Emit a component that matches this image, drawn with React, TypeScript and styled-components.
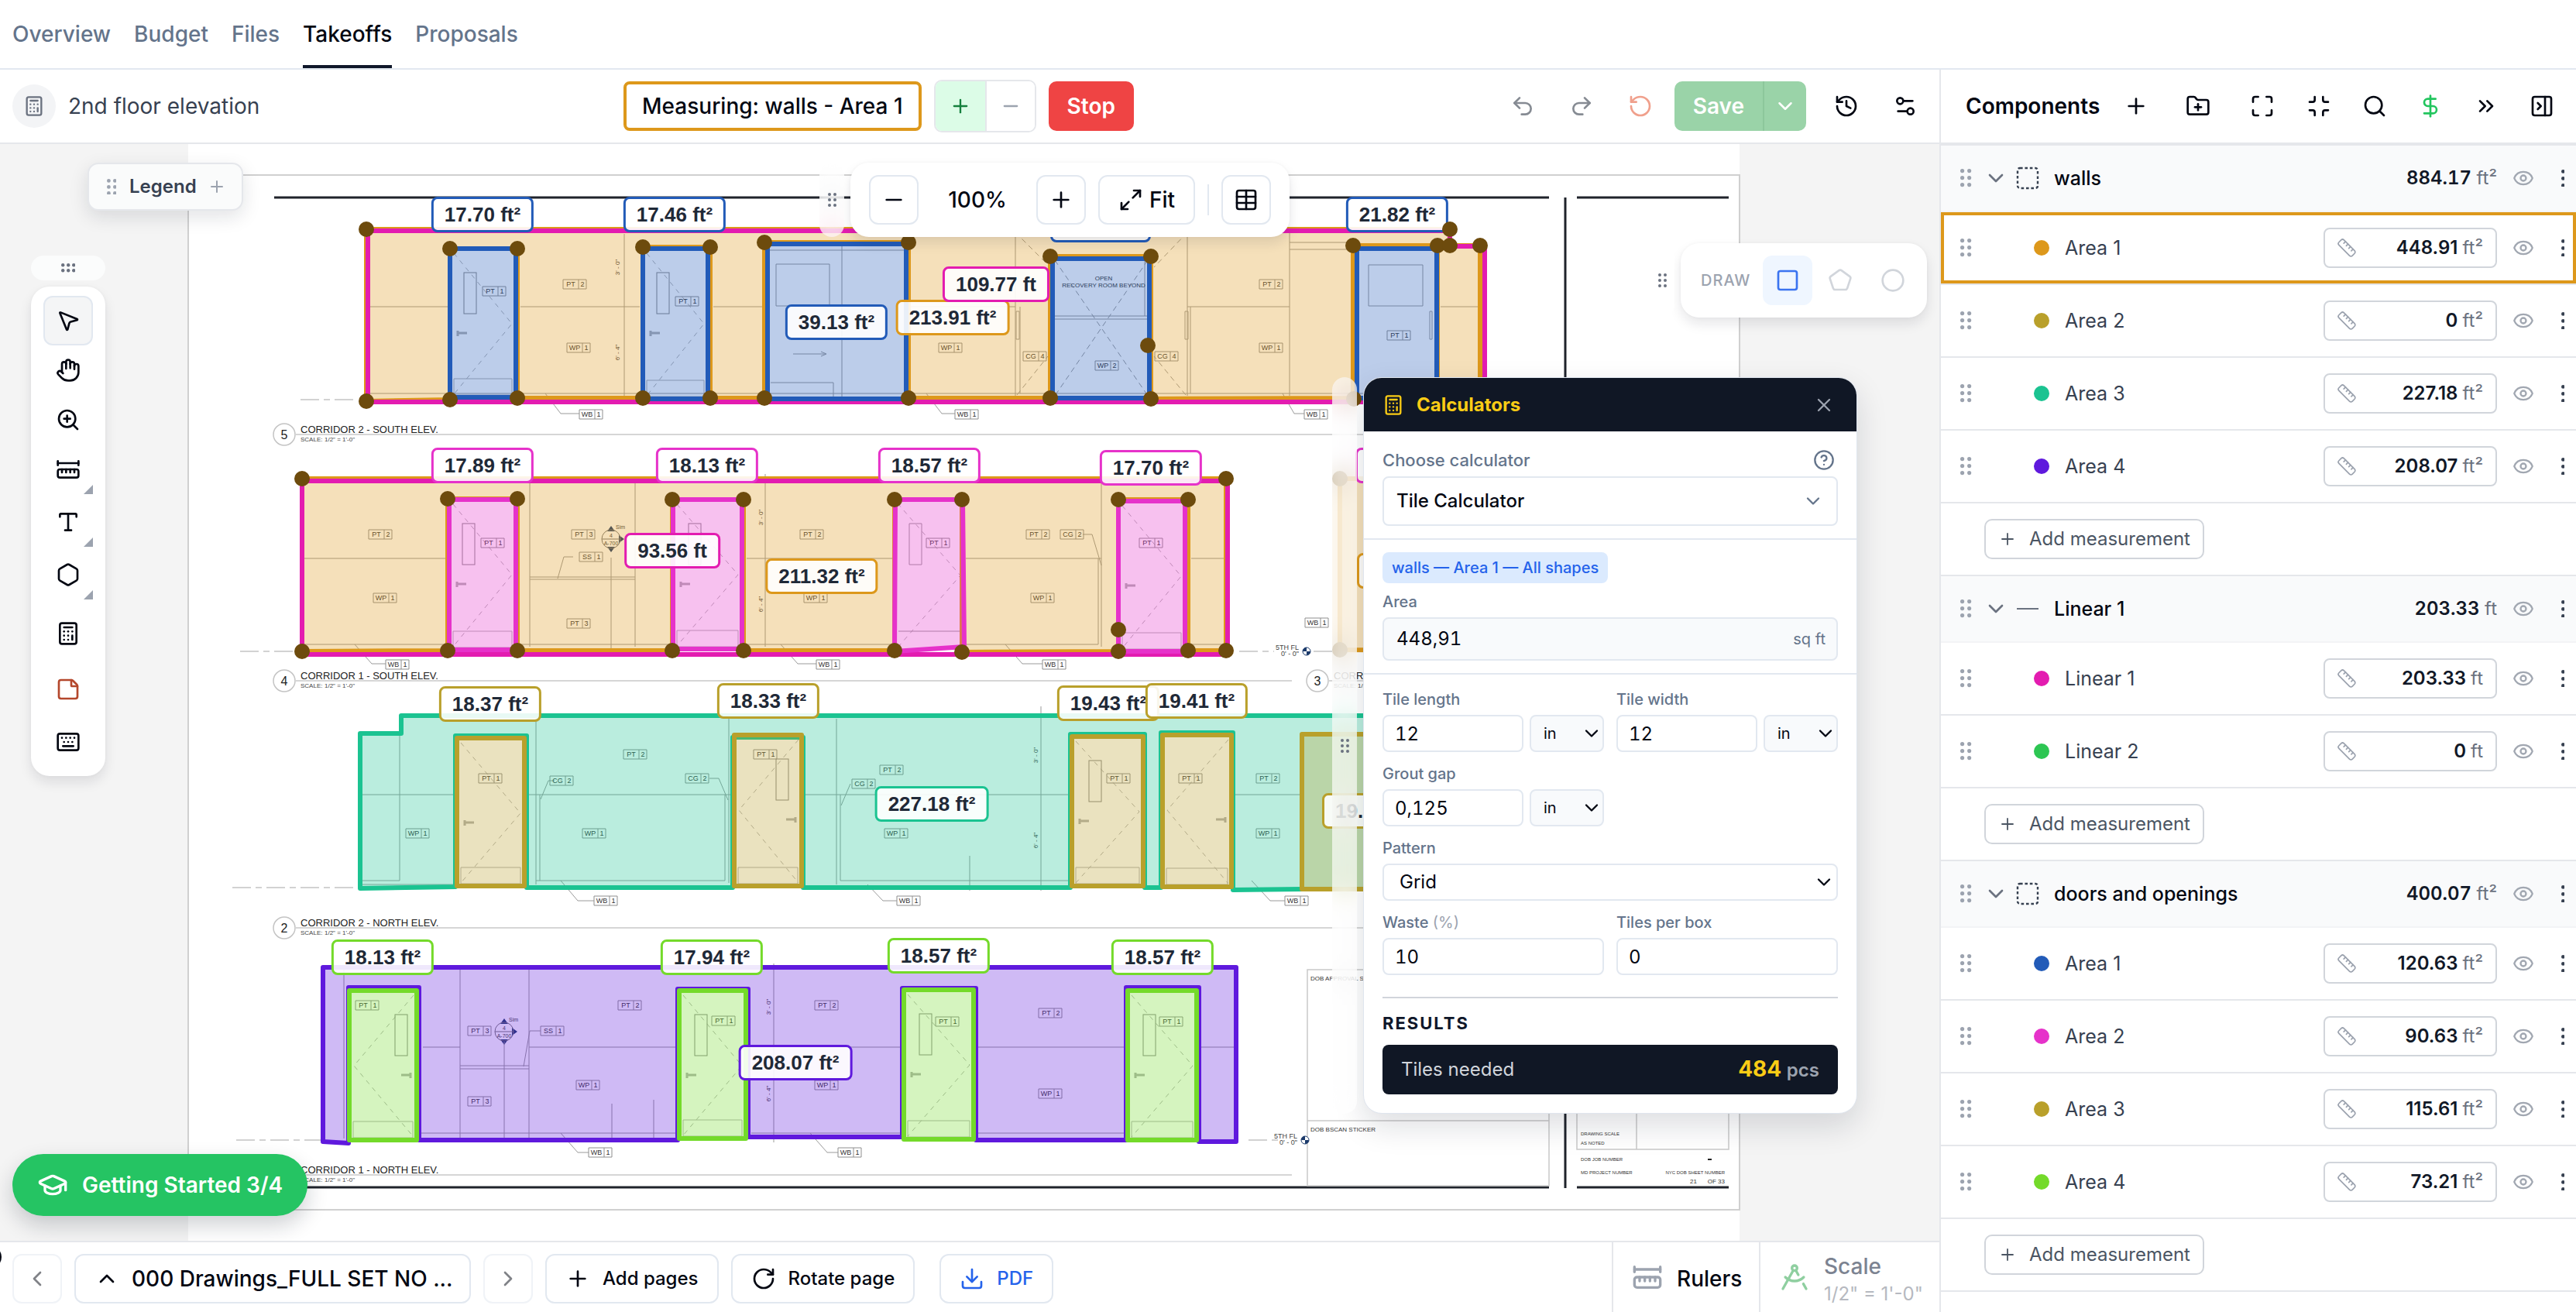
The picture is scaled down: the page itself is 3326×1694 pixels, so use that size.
import React from 'react';
import styled, { createGlobalStyle, css } from 'styled-components';
import {
  Calculator, ChevronDown, ChevronLeft, ChevronRight, ChevronUp, ChevronsRight, CircleHelp, Circle, DollarSign,
  Download, DraftingCompass, Eye, FolderPlus, GraduationCap, Hand, Hexagon, History, Keyboard, Maximize, Maximize2,
  Minimize, Minus, MousePointer2, PanelRightClose, Pentagon, Plus, Redo2, RotateCcw, RotateCw, RulerDimensionLine,
  Ruler, Search, Settings2, Square, StickyNote, Table, Type, Undo2, X, ZoomIn,
} from 'lucide-react';

const Global = createGlobalStyle`
  *, *::before, *::after { box-sizing: border-box; }
  body { margin: 0; background: #fff; color: #030712; font-family: Inter, "Liberation Sans", sans-serif; font-size: 28px; line-height: 40px; }
  button, input, select { font: inherit; color: inherit; margin: 0; }
  button { cursor: pointer; white-space: nowrap; }
  svg { flex: none; display: block; }
`;

const Shell = styled.div`display: flex; flex-direction: column; height: 100vh; overflow: hidden;`;

const Nav = styled.nav`display: flex; gap: 30px; height: 90px; flex: none; padding: 0 16px; border-bottom: 2px solid #e2e8f0;`;
const NavLink = styled.a<{ $active?: boolean }>`
  display: flex; align-items: center; text-decoration: none; font-weight: 500;
  border-bottom: 4px solid ${p => (p.$active ? '#0f172a' : 'transparent')}; padding-top: 4px;
  color: ${p => (p.$active ? '#030712' : '#64748b')};
`;

const Body = styled.div`display: flex; flex: 1; min-height: 0;`;
const Main = styled.main`display: flex; flex-direction: column; flex: 1; min-width: 0;`;

const TopBar = styled.header`
  display: flex; align-items: center; justify-content: space-between; flex: none;
  height: 96px; padding: 0 12px 0 16px; border-bottom: 2px solid #e5e7eb;
`;
const Group = styled.div<{ $gap?: number }>`display: flex; align-items: center; gap: ${p => p.$gap ?? 12}px;`;
const Avatar = styled.span`
  display: grid; place-items: center; width: 56px; height: 56px; border-radius: 50%; background: #f3f4f6; color: #6b7280;
`;
const Title = styled.h1`margin: 0; font-size: 28px; font-weight: 400; color: #374151;`;
const Measuring = styled.div`
  display: flex; align-items: center; height: 64px; padding: 0 20px; border: 4px solid #dd981b; border-radius: 8px; font-weight: 500;
`;
const Toggle = styled.div`display: flex; height: 68px; border: 2px solid #e5e7eb; border-radius: 10px; overflow: hidden;`;
const ToggleButton = styled.button<{ $on?: boolean }>`
  display: grid; place-items: center; width: 64px; border: 0; padding: 0;
  background: ${p => (p.$on ? '#dcfce7' : '#fff')}; color: ${p => (p.$on ? '#15803d' : '#9ca3af')};
  & + & { border-left: 2px solid #e5e7eb; }
`;
const StopButton = styled.button`
  height: 64px; padding: 0 24px; border: 0; border-radius: 10px; background: #ef4444; color: #fff; font-weight: 600;
`;
const IconButton = styled.button<{ $tone?: string }>`
  display: grid; place-items: center; width: 64px; height: 64px; padding: 0; border: 0; background: none;
  color: ${p => p.$tone ?? '#030712'};
`;
const SaveSplit = styled.div`display: flex; height: 64px; margin-right: 8px; border-radius: 10px; overflow: hidden; background: #9ad3a8; color: #fff;`;
const SaveButton = styled.button`border: 0; background: none; padding: 0 24px; font-weight: 600;`;
const SaveMenu = styled.button`
  display: grid; place-items: center; width: 56px; padding: 0; border: 0; border-left: 2px solid #8cc79b; background: none;
`;

const Canvas = styled.section`position: relative; flex: 1; min-height: 0; overflow: hidden; background: #f4f4f4;`;
const Sheet = styled.svg`position: absolute; left: 0; top: 0; font-family: "Liberation Sans", Arial, sans-serif;`;
const Pin = styled.span<{ $x: number; $y: number; $c: string }>`
  position: absolute; left: ${p => p.$x}px; top: ${p => p.$y - 186}px; transform: translate(-50%, -50%);
  height: 46px; min-width: 130px; padding: 0 14px; border: 3px solid ${p => p.$c}; border-radius: 8px; background: rgba(255, 255, 255, 0.9);
  font: bold 26px/40px "Liberation Sans", Arial, sans-serif; color: #1f2937; white-space: nowrap;
`;
const ShortPin = styled(Pin)`min-width: 0;`;

const Floating = styled.div<{ $x: number; $y: number }>`position: absolute; left: ${p => p.$x}px; top: ${p => p.$y}px; display: flex;`;
const card = css`background: #fff; border-radius: 24px; box-shadow: 0 8px 16px rgba(15, 23, 42, 0.1), 0 0 4px rgba(15, 23, 42, 0.04);`;
const SideGrip = styled.div`
  display: grid; place-items: center; width: 32px; margin-right: 8px; border-radius: 16px;
  background: rgba(255, 255, 255, 0.65); backdrop-filter: blur(16px); color: #6b7280;
`;
const ZoomCard = styled.div`${card} display: flex; align-items: center; gap: 16px; padding: 16px 24px; font-weight: 500;`;
const OutlineButton = styled.button<{ $tone?: string; $faint?: boolean; $pad?: number; $gap?: number }>`
  display: flex; align-items: center; justify-content: center; gap: ${p => p.$gap ?? 16}px; height: 64px; min-width: 64px;
  padding: 0 ${p => p.$pad ?? 0}px; border: 2px solid #e2e8f0; border-radius: 12px; background: #fff;
  color: ${p => p.$tone ?? '#030712'}; font-weight: 500; opacity: ${p => (p.$faint ? 0.5 : 1)};
`;
const Percent = styled.span`width: 120px; text-align: center;`;
const Divider = styled.span`width: 2px; height: 40px; background: #e2e8f0;`;
const DrawCard = styled.div`${card} display: flex; align-items: center; gap: 4px; padding: 16px 12px 16px 26px;`;
const DrawLabel = styled.span`margin-right: 12px; font-size: 20px; font-weight: 500; letter-spacing: 1px; color: #9ca3af;`;
const ShapeButton = styled(IconButton)<{ $on?: boolean }>`border-radius: 12px; background: ${p => (p.$on ? '#eff6ff' : 'none')};`;

const Legend = styled.button`
  position: absolute; left: 113px; top: 24px; display: flex; align-items: center; gap: 14px; height: 62px; padding: 0 20px;
  border: 2px solid #e5e7eb; border-radius: 14px; background: #fafbfb; box-shadow: 0 8px 24px rgba(15, 23, 42, 0.12);
  font-size: 24px; font-weight: 600; color: #374151;
`;

const ToolDock = styled.div`position: absolute; left: 40px; top: 144px; width: 96px; display: flex; flex-direction: column; gap: 8px;`;
const DockGrip = styled.div`display: grid; place-items: center; height: 32px; border-radius: 16px; background: #fbfcfc; color: #6b7280;`;
const DockCard = styled.div`${card} display: flex; flex-direction: column; align-items: center; padding: 12px 0;`;
const Tool = styled.button<{ $on?: boolean; $gap?: number; $tone?: string; $more?: boolean }>`
  position: relative; display: grid; place-items: center; width: 64px; height: 64px; padding: 0; margin-top: ${p => p.$gap ?? 0}px;
  border: 2px solid ${p => (p.$on ? '#e2e8f0' : 'transparent')}; border-radius: 12px;
  background: ${p => (p.$on ? '#f4f5f6' : 'none')}; color: ${p => p.$tone ?? '#030712'};
  ${p => p.$more && css`
    &::after { content: ''; position: absolute; right: -2px; bottom: -2px; border-left: 12px solid transparent; border-bottom: 12px solid #9ca3af; }
  `}
`;

const Calc = styled.section`
  width: 638px; border: 1px solid #dfe5ee; border-radius: 24px; overflow: hidden; background: #fff;
  box-shadow: 0 16px 40px rgba(15, 23, 42, 0.14); font-size: 24px; line-height: 32px;
`;
const CalcHead = styled.header`
  display: flex; align-items: center; gap: 16px; height: 69px; padding: 0 28px 0 24px; background: #101725; color: #facc15;
`;
const CalcTitle = styled.h2`margin: 0; flex: 1; font-size: 24px; font-weight: 700;`;
const PlainButton = styled.button`display: grid; place-items: center; padding: 0; border: 0; background: none; color: #9ca3af;`;
const Section = styled.div<{ $last?: boolean }>`
  display: flex; flex-direction: column; padding: ${p => (p.$last ? '12px 24px 24px' : '16px 24px')};
  ${p => !p.$last && css`border-bottom: 2px solid #e2e8f0;`}
`;
const Row = styled.div`
  display: flex; align-items: center; justify-content: space-between; height: 42px; padding-right: 4px; font-size: 22px; font-weight: 500; color: #64748b;
`;
const Badge = styled.span`
  align-self: flex-start; height: 40px; margin-bottom: 4px; padding: 4px 12px; border-radius: 8px; background: #dbeafe; color: #2563eb;
  font-size: 20px; font-weight: 500;
`;
const FieldLabel = styled.label`display: block; height: 40px; padding: 4px 0; font-size: 20px; font-weight: 500; color: #64748b;`;
const Muted = styled.span`font-weight: 400; color: #9ca3af;`;
const box = css`border: 2px solid #e2e8f0; border-radius: 8px; outline: 0; min-width: 0; width: 100%;`;
const Input = styled.input`${box} height: 48px; padding: 0 14px; background: #fff; font-size: 24px; font-variant-numeric: tabular-nums;`;
const AreaBox = styled.div`${box} display: flex; align-items: center; height: 56px; padding: 0 14px 0 16px; background: #f8fafc;`;
const AreaInput = styled.input`
  flex: 1; min-width: 0; padding: 0; border: 0; outline: 0; background: none; font-size: 24px; font-variant-numeric: tabular-nums;
`;
const Unit = styled.span`font-size: 20px; color: #64748b;`;
const Picker = styled.div<{ $w?: number; $inset: number; $gray?: boolean }>`
  position: relative; flex: none; width: ${p => (p.$w ? `${p.$w}px` : '100%')};
  svg { position: absolute; right: ${p => p.$inset}px; top: 50%; transform: translateY(-50%); pointer-events: none; color: ${p => (p.$gray ? '#64748b' : '#030712')}; }
`;
const Select = styled.select<{ $h?: number; $pad?: number; $small?: boolean }>`
  ${box} appearance: none; display: block; height: ${p => p.$h ?? 48}px; padding: 0 ${p => p.$pad ?? 16}px;
  background: ${p => (p.$small ? '#f8fafc' : '#fff')}; font-size: ${p => (p.$small ? 20 : 24)}px; font-weight: ${p => (p.$h ? 500 : 400)};
`;
const Fields = styled.div`display: grid; grid-template-columns: 1fr 1fr; gap: 8px 16px;`;
const Field = styled.div<{ $wide?: boolean }>`${p => p.$wide && css`grid-column: 1 / -1;`} min-width: 0;`;
const Pair = styled.div`display: flex; gap: 8px;`;
const Results = styled.h3`
  margin: 28px 0 0; padding: 16px 0 12px; border-top: 2px solid #d1d5db; font-size: 22px; line-height: 32px; font-weight: 700; letter-spacing: 2px; color: #0f172a;
`;
const ResultBox = styled.div`
  display: flex; align-items: center; justify-content: space-between; height: 64px; padding: 0 24px; border-radius: 8px; background: #101725; color: #d1d5db;
`;
const ResultValue = styled.strong`font-size: 28px; font-weight: 700; color: #facc15;`;
const ResultUnit = styled.span`font-size: 24px; font-weight: 600; color: #9ca3af;`;

const Started = styled.button`
  position: absolute; left: 16px; bottom: 32px; display: flex; align-items: center; gap: 18px; height: 80px; padding: 0 32px;
  border: 0; border-radius: 40px; background: #25c463; color: #fff; font-weight: 600; box-shadow: 0 12px 28px rgba(15, 23, 42, 0.2);
`;

const BottomBar = styled.footer`
  position: relative; display: flex; align-items: center; gap: 16px; height: 92px; flex: none; padding: 4px 0 0 16px; border-top: 2px solid #e5e7eb;
`;
const EdgeDot = styled.span`position: absolute; left: -28px; top: 4px; width: 30px; height: 30px; border-radius: 50%; background: #030712;`;
const PageButton = styled(OutlineButton)`width: 512px; justify-content: flex-start;`;
const Small = styled.span`font-size: 24px;`;
const Spacer = styled.span`flex: 1;`;
const Cell = styled.button<{ $w: number; $tone?: string }>`
  display: flex; align-items: center; gap: 18px; align-self: stretch; width: ${p => p.$w}px; padding: 0 0 0 24px; margin: -4px 0 0 -16px;
  border: 0; border-left: 2px solid #e5e7eb; background: none; text-align: left; font-weight: 500;
  & > svg { color: ${p => p.$tone ?? '#9ca3af'}; }
`;
const ScaleText = styled.span`display: flex; flex-direction: column; padding-top: 8px; line-height: 36px; color: #7c8391;`;
const ScaleValue = styled.small`font-size: 24px; font-weight: 400; color: #b6b9c0;`;
const CellText = styled.span`padding-top: 4px;`;

const Side = styled.aside`width: 822px; flex: none; border-left: 2px solid #e5e7eb; overflow: hidden;`;
const SideHead = styled.header`display: flex; align-items: center; height: 98px; padding-left: 32px; border-bottom: 4px solid #e5e7eb;`;
const SideTitle = styled.h2`margin: 0 16px 0 0; width: 170px; font-size: 28px; font-weight: 600;`;
const HeadIcon = styled(IconButton)<{ $w: number }>`width: ${p => p.$w}px; flex: none;`;
const line = css`display: flex; align-items: center; padding-left: 20px; font-size: 25px; white-space: nowrap;`;
const GroupRow = styled.div`${line} height: 86px; border-bottom: 2px solid #f3f4f6; background: #f9fafb; font-weight: 500;`;
const ItemRow = styled.div<{ $on?: boolean }>`
  ${line} height: 94px; border-bottom: 2px solid #e5e7eb; color: #374151;
  box-shadow: ${p => (p.$on ? 'inset 0 0 0 4px #dd981b' : 'none')};
`;
const AddRow = styled.div`display: flex; align-items: center; height: 94px; padding-left: 56px; border-bottom: 2px solid #e5e7eb;`;
const Slot = styled.span<{ $w: number; $tone?: string }>`display: grid; place-items: center; width: ${p => p.$w}px; flex: none; color: ${p => p.$tone ?? '#9ca3af'};`;
const Dot = styled.span<{ $c: string }>`width: 20px; height: 20px; margin: 0 20px 0 75px; border-radius: 50%; background: ${p => p.$c};`;
const Name = styled.span<{ $lead?: boolean }>`flex: 1; padding-left: ${p => (p.$lead ? 18 : 0)}px;`;
const Value = styled.span<{ $tabular?: boolean }>`
  font-size: 24px; font-weight: 600; color: #111827; font-variant-numeric: ${p => (p.$tabular ? 'tabular-nums' : 'normal')};
`;
const Ft = styled.span`font-weight: 400; color: #6b7280;`;
const ValueButton = styled.button`
  display: flex; align-items: center; justify-content: space-between; width: 224px; height: 52px; padding: 0 16px 0 14px; flex: none;
  border: 2px solid #d1d5db; border-radius: 8px; background: #fff;
`;
const RowIcon = styled(IconButton)<{ $w: number }>`width: ${p => p.$w}px; height: 40px; flex: none;`;
const AddButton = styled.button`
  display: flex; align-items: center; gap: 16px; height: 52px; padding: 0 16px; border: 2px solid #d1d5db; border-radius: 10px;
  background: #fff; font-size: 24px; color: #4b5563;
`;

/* ---------- small drawings ---------- */
const Dots = ({ cols, rows, gap, r }: { cols: number; rows: number; gap: number; r: number }) => (
  <svg width={(cols - 1) * gap + r * 2} height={(rows - 1) * gap + r * 2} fill="currentColor" aria-hidden>
    {Array.from({ length: cols * rows }, (_, i) => (
      <circle key={i} cx={r + (i % cols) * gap} cy={r + Math.floor(i / cols) * gap} r={r} />
    ))}
  </svg>
);
const DashedSquare = () => (
  <svg width="32" height="32" fill="none" stroke="#374151" strokeWidth="2.4" strokeDasharray="3.6 2.8" aria-hidden>
    <rect x="3" y="3" width="26" height="26" rx="3" />
  </svg>
);
const Dash = () => (
  <svg width="32" height="32" stroke="#6b7280" strokeWidth="2" aria-hidden><path d="M2 16H30" /></svg>
);

/* ---------- drawing sheet ---------- */
const C = { orange: '#dd981b', magenta: '#e31cb0', blue: '#225bb8', pink: '#e632ca', green: '#1bc391', gold: '#b9a02b', purple: '#5f19dd', lime: '#74da2a', knob: '#6d4b0d' };

type T = [number, number, string, string];
const tags: T[] = [
  [742, 367, 'PT', '2'], [747, 449, 'WP', '1'], [638, 376, 'PT', '1'], [887, 389, 'PT', '1'], [1227, 449, 'WP', '1'], [1336, 460, 'CG', '4'],
  [1429, 472, 'WP', '2'], [1506, 460, 'CG', '4'], [763, 535, 'WB', '1'], [1248, 535, 'WB', '1'], [1641, 367, 'PT', '2'], [1641, 449, 'WP', '1'],
  [1699, 535, 'WB', '1'], [1806, 433, 'PT', '1'], [491, 690, 'PT', '2'], [497, 772, 'WP', '1'], [636, 701, 'PT', '1'], [753, 690, 'PT', '3'],
  [763, 719, 'SS', '1'], [747, 805, 'PT', '3'], [1048, 690, 'PT', '2'], [1053, 772, 'WP', '1'], [1211, 701, 'PT', '1'], [1340, 690, 'PT', '2'],
  [1384, 690, 'CG', '2'], [1346, 772, 'WP', '1'], [1486, 701, 'PT', '1'], [513, 858, 'WB', '1'], [1069, 858, 'WB', '1'], [1361, 858, 'WB', '1'],
  [1700, 804, 'WB', '1'], [820, 974, 'PT', '2'], [633, 1005, 'PT', '1'], [725, 1008, 'CG', '2'], [900, 1005, 'CG', '2'], [539, 1076, 'WP', '1'],
  [767, 1076, 'WP', '1'], [988, 974, 'PT', '1'], [1151, 994, 'PT', '2'], [1115, 1012, 'CG', '2'], [1157, 1076, 'WP', '1'], [1444, 1005, 'PT', '1'],
  [1537, 1005, 'PT', '1'], [1637, 1005, 'PT', '2'], [1637, 1076, 'WP', '1'], [782, 1163, 'WB', '1'], [1173, 1163, 'WB', '1'], [1674, 1163, 'WB', '1'],
  [474, 1298, 'PT', '1'], [619, 1331, 'PT', '3'], [713, 1331, 'SS', '1'], [813, 1298, 'PT', '2'], [934, 1318, 'PT', '1'], [1067, 1298, 'PT', '2'],
  [1223, 1319, 'PT', '1'], [1356, 1308, 'PT', '2'], [1512, 1319, 'PT', '1'], [619, 1422, 'PT', '3'], [759, 1401, 'WP', '1'], [1067, 1401, 'WP', '1'],
  [1356, 1412, 'WP', '1'], [775, 1488, 'WB', '1'], [1097, 1488, 'WB', '1'],
];

/* left, right, top, bottom, window x, colour, swing towards the left */
type D = [number, number, number, number, number, string, boolean];
const doors: D[] = [
  [581, 666, 321, 513, 599, C.blue, false], [830, 914, 321, 515, 848, C.blue, false],
  [580, 666, 645, 839, 597, C.pink, false], [869, 958, 645, 838, 889, C.pink, false],
  [1444, 1530, 647, 841, 0, C.pink, false],
  [590, 677, 953, 1144, 0, C.gold, false], [948, 1035, 949, 1144, 1002, C.gold, true], [1384, 1476, 951, 1144, 1406, C.gold, false],
  [1501, 1590, 949, 1145, 0, C.gold, true],
  [451, 538, 1279, 1472, 510, C.lime, true], [877, 963, 1279, 1470, 897, C.lime, false],
  [1167, 1257, 1278, 1471, 1187, C.lime, false], [1456, 1545, 1279, 1472, 1476, C.lime, false],
];

const lines = [
  'M476 396H578M672 396H826M921 396H984M1176 396H1311M1533 396H1665M1860 396H1908',
  'M806 302V511M1087 318V512M994 323H1168M1311 300V511M1317 396V508M1533 300V511M1665 300V511M1537 396V508M1665 313H1745M1665 322H1745',
  'M476 508H1910M1002 341H1071V395H1002ZM995 494H1076V513M1024 457H1066M1060 454L1067 457L1060 460M1767 342H1837V395H1767ZM1362 408H1482M1362 412H1482M1478 336V408',
  'M1312 402h4v36h-4zM1530 402h4v36h-4zM1846 402h3v36h-3z',
  'M393 721H576M964 721H1152M1247 721H1422M1538 721H1582M684 624V835M820 624V835M684 745H820M684 748H820M988 612V835M1422 624V835M1418 721V832H1247M393 832H576M672 832H866M960 832H1152M1538 832H1580',
  'M516 950V1137H468M468 1026H586M682 1026H944M1040 1026H1380M1592 1026H1678M692 928V1142M697 1026V1137M941 928V1140M936 1026V1137H692M1080 928V1142M1085 1026V1137M1344 912V1150M1085 1137H1380M1252 1105V1150M468 1142H588',
  'M444 1252V1470M546 1352H594M683 1352H874M970 1352H1165M1262 1352H1454M1550 1352H1594M594 1252V1470M683 1252V1470M594 1376H683M594 1380H683M999 1244V1475M541 1463H874M970 1463H1165M1262 1463H1454M651 1345V1470M790 1425V1470M789 720V838M844 1420V1470',
  'M704 508l20 26h24M1196 508l20 26h17M1656 508l15 26h13M458 832l22 25h18M1008 832l22 25h24M1298 832l22 25h26M724 1137l22 26h21M1120 1142l20 21h18M1616 1137l24 26h19M724 1463l22 25h14M1046 1463l22 25h14',
  'M740 719h-12l-8 28M716 1008h-8l-10 24M916 1005h12l12 28M1398 690h12l12 40M1098 1012l-12 28M698 1331h-14l-8 46',
];

const Elevation = ({ n, y, name, end = 1668, x = 367 }: { n: string; y: number; name: string; end?: number; x?: number }) => (
  <g>
    <path d={`M${x + 15} ${y}H${end}`} stroke="#c9c9c9" strokeWidth="1.5" />
    <circle cx={x} cy={y} r="14" fill="#fff" stroke="#c4c4c4" strokeWidth="1.5" />
    <text x={x} y={y + 6} fontSize="16" textAnchor="middle" fill="#222">{n}</text>
    <text x={x + 21} y={y - 2} fontSize="13" fill="#222">{name}</text>
    <text x={x + 21} y={y + 9} fontSize="8" fill="#444">SCALE:</text>
    <text x={x + 52} y={y + 9} fontSize="8" fill="#444">1/2" = 1'-0"</text>
  </g>
);
const Level = ({ x, y }: { x: number; y: number }) => (
  <g>
    <text x={x - 10} y={y - 2} fontSize="9" textAnchor="end" fill="#444">5TH FL</text>
    <text x={x - 10} y={y + 6} fontSize="9" textAnchor="end" fill="#444">0' - 0"</text>
    <circle cx={x} cy={y} r="5" fill="#fff" stroke="#1b3a6b" />
    <path d={`M${x} ${y}V${y - 5}A5 5 0 0 0 ${x - 5} ${y}ZM${x} ${y}V${y + 5}A5 5 0 0 0 ${x + 5} ${y}Z`} fill="#1b3a6b" />
  </g>
);
const Marker = ({ x, y }: { x: number; y: number }) => (
  <g>
    <path d={`M${x - 5} ${y - 10}L${x} ${y - 17}L${x + 5} ${y - 10}ZM${x - 5} ${y + 10}L${x} ${y + 17}L${x + 5} ${y + 10}ZM${x + 10} ${y - 5}L${x + 17} ${y}L${x + 10} ${y + 5}Z`} fill="#1b3a6b" />
    <circle cx={x} cy={y} r="12" fill="none" stroke="#777" />
    <path d={`M${x - 12} ${y}h24`} stroke="#777" />
    <text x={x} y={y - 2} fontSize="7" textAnchor="middle" fill="#444">4</text>
    <text x={x} y={y + 8} fontSize="7" textAnchor="middle" fill="#444">A-700</text>
    <text x={x + 6} y={y - 13} fontSize="7" fill="#444">Sim</text>
  </g>
);

const orangeTop = '473,296 1872,296 1872,317 1911,317 1911,514 1856,514 1856,317 1747,317 1747,514 1486,515 1486,331 1356,331 1356,514 1173,514 1173,313 987,313 987,514 917,514 917,319 830,319 830,514 668,514 668,321 581,321 581,516 473,518';
const orangeMid = '390,618 1583,618 1583,840 1534,840 1534,645 1444,645 1444,841 1242,842 1242,645 1155,645 1155,840 960,840 960,645 868,645 868,840 668,840 668,644 578,644 578,840 390,841';
const greenPoly = '465,947 518,947 518,924 1900,924 1900,1148 1681,1148 1592,1149 1592,946 1499,946 1499,1146 1478,1146 1478,948 1382,948 1382,1146 1037,1146 1037,952 946,952 946,1146 680,1146 680,950 588,950 588,1145 465,1147';
const purplePoly = '417,1249 1596,1249 1596,1474 1548,1474 1548,1275 1454,1275 1454,1472 1260,1472 1260,1276 1165,1276 1165,1468 966,1468 966,1277 875,1277 875,1472 541,1472 541,1275 450,1275 450,1476 417,1474';
const knobs = [
  [473, 296], [473, 518], [581, 321], [668, 321], [581, 516], [668, 514], [830, 319], [917, 319], [830, 514], [917, 514], [987, 313], [1173, 313],
  [987, 514], [1173, 514], [1356, 331], [1486, 331], [1482, 446], [1356, 514], [1486, 515], [1747, 317], [1856, 317], [1872, 317], [1872, 296],
  [1911, 317], [1748, 515], [390, 618], [1583, 618], [390, 841], [1583, 840], [578, 644], [668, 644], [578, 840], [668, 840], [868, 645], [960, 645],
  [868, 840], [960, 840], [1155, 645], [1242, 645], [1155, 840], [1242, 842], [1444, 645], [1534, 645], [1444, 813], [1444, 841], [1534, 840],
  [1730, 618], [1730, 839],
];
const pins: [number, number, string, string][] = [
  [623, 277, '17.70 ft²', C.blue], [871, 277, '17.46 ft²', C.blue], [1080, 416, '39.13 ft²', C.blue], [1230, 410, '213.91 ft²', C.orange],
  [1286, 367, '109.77 ft', C.magenta], [1421, 290, '', C.blue], [1804, 277, '21.82 ft²', C.blue], [623, 601, '17.89 ft²', C.pink],
  [913, 601, '18.13 ft²', C.pink], [1200, 601, '18.57 ft²', C.pink], [1486, 604, '17.70 ft²', C.pink],
  [1061, 744, '211.32 ft²', C.orange], [633, 909, '18.37 ft²', C.gold], [992, 905, '18.33 ft²', C.gold], [1431, 908, '19.43 ft²', C.gold],
  [1545, 905, '19.41 ft²', C.gold], [1203, 1038, '227.18 ft²', C.green], [1772, 1047, '19.40', C.gold], [494, 1236, '18.13 ft²', C.lime],
  [919, 1236, '17.94 ft²', C.lime], [1212, 1234, '18.57 ft²', C.lime], [1501, 1236, '18.57 ft²', C.lime], [1027, 1372, '208.07 ft²', C.purple],
  [1815, 601, '', C.pink], [1817, 737, '', C.orange],
];

const Plan = () => (
  <Sheet width="2504" height="1416" viewBox="0 186 2504 1416" fill="none" role="img" aria-label="2nd floor elevation drawing">
    <rect x="243" y="186" width="2003" height="1416" fill="#fff" />
    <rect x="243" y="226" width="2003" height="1336" stroke="#d0d0d0" strokeWidth="2" />
    <path d="M354 255H2000M2036 255H2232M2021 255V1534M354 1533H2000M2036 1533H2232" stroke="#1f232b" strokeWidth="3" />
    <path d="M1688 1252H2000V1531H1688ZM1688 1447H2000M2036 1300V1484H2232V1300M2113 1300V1484" stroke="#c9c9c9" strokeWidth="1.5" />
    <g fill="#333">
      <text x="1692" y="1266" fontSize="8">DOB APPROVAL STAMP</text>
      <text x="1692" y="1461" fontSize="8">DOB BSCAN STICKER</text>
      <text x="2041" y="1466" fontSize="6">DRAWING SCALE</text>
      <text x="2041" y="1478" fontSize="6">AS NOTED</text>
      <text x="2041" y="1499" fontSize="6">DOB JOB NUMBER</text>
      <text x="2041" y="1516" fontSize="6">MD PROJECT NUMBER</text>
      <text x="2227" y="1516" fontSize="6" textAnchor="end">NYC DOB SHEET NUMBER</text>
      <text x="2182" y="1528" fontSize="8">21</text>
      <text x="2227" y="1528" fontSize="8" textAnchor="end">OF 33</text>
      <path d="M2205 1497h5" stroke="#222" strokeWidth="2" />
    </g>
    <Elevation n="5" y={561} name="CORRIDOR 2 - SOUTH ELEV." end={1900} />
    <Elevation n="4" y={879} name="CORRIDOR 1 - SOUTH ELEV." />
    <Elevation n="3" y={879} name="CORRIDOR 1 - WEST ELEV." end={1990} x={1701} />
    <Elevation n="2" y={1198} name="CORRIDOR 2 - NORTH ELEV." end={1900} />
    <Elevation n="1" y={1517} name="CORRIDOR 1 - NORTH ELEV." />
    <path d="M388 516H461M310 841H380M300 1146H460M305 1472H415M1600 841H1645M1696 841H1740M1612 1472H1655" stroke="#c4c4c4" strokeWidth="1.5" strokeDasharray="24 6 8 6" />
    <Level x={1687} y={841} />
    <Level x={1685} y={1472} />
    <Marker x={789} y={696} />
    <Marker x={651} y={1332} />
    <g stroke="#9a9a9a" strokeWidth="1">
      {lines.map(d => <path key={d} d={d} />)}
      <path d="M1362 336L1482 511M1482 336L1362 511M1311 300L1356 345M1533 300L1490 345M1313 510L1353 460M1531 510L1490 460" strokeDasharray="7 5" />
      <path d="M1159 650L1240 743L1159 836" strokeDasharray="6 6" stroke="#b0b0b0" />
      <path d="M1174 676h16v53h-16zM1160 815h80" />
    </g>
    {doors.map(([a, b, t, m, w, , left]) => (
      <g key={`${a}-${t}`} stroke="#b0b0b0">
        <path d={left ? `M${b - 4} ${t + 6}L${a + 6} ${t + 97}L${b - 4} ${m - 4}` : `M${a + 5} ${t + 6}L${b - 5} ${t + 97}L${a + 5} ${m - 4}`} strokeDasharray="6 6" />
        <path d={`M${a + 5} ${m - 24}H${b - 5}V${m - 3}H${a + 5}Z`} />
        {w > 0 && <rect x={w} y={t + 31} width="16" height="53" stroke="#888" />}
        <path d={left ? `M${b - 8} ${t + 106}v7M${b - 8} ${t + 109}h-12` : `M${a + 10} ${t + 106}v7M${a + 10} ${t + 109}h12`} strokeWidth="3" />
      </g>
    ))}
    {tags.map(([x, y, a, b]) => (
      <g key={`${x}-${y}`}>
        <path d={`M${x - 15} ${y - 6}h30v12h-30zM${x + 5} ${y - 6}v12`} stroke="#8f8f8f" />
        <text x={x - 5} y={y + 3} fontSize="9" textAnchor="middle" fill="#333">{a}</text>
        <text x={x + 10} y={y + 3} fontSize="9" textAnchor="middle" fill="#333">{b}</text>
      </g>
    ))}
    <g fill="#333" fontSize="8" textAnchor="middle">
      <text x="1425" y="362">OPEN</text>
      <text x="1425" y="371">RECOVERY ROOM BEYOND</text>
      {[[800, 345, "3' - 0\""], [800, 455, "6' - 4\""], [985, 668, "3' - 0\""], [985, 780, "6' - 4\""], [1340, 975, "3' - 0\""], [1340, 1085, "6' - 4\""], [995, 1300, "3' - 0\""], [995, 1412, "6' - 4\""]].map(([x, y, s]) => (
        <text key={`${x}${y}`} transform={`translate(${x} ${y}) rotate(-90)`}>{s}</text>
      ))}
    </g>

    <g strokeWidth="6" strokeLinejoin="round" fillOpacity="0.3">
      <polygon points={orangeTop} fill={C.orange} stroke={C.orange} />
      <polygon points={orangeMid} fill={C.orange} stroke={C.orange} />
      <polygon points="1730,618 1900,618 1900,840 1730,839" fill={C.orange} stroke={C.orange} />
      <polygon points={greenPoly} fill={C.green} stroke={C.green} />
      <polygon points={purplePoly} fill={C.purple} stroke={C.purple} />
      <path d="M475 519V298H1872V318H1917V519H473" stroke={C.magenta} />
      <path d="M390 846V621H1585V845H388" stroke={C.magenta} />
      <path d="M991 315H1170V515H991ZM1359 334H1484V514H1359ZM1752 321H1855V514H1752Z" fill={C.blue} stroke={C.blue} />
      <path d="M1156 645H1243L1245 835L1155 841Z" fill={C.pink} stroke={C.pink} />
      {doors.map(([a, b, t, m, , c]) => (
        <path key={`${a}-${t}`} d={`M${a} ${t}H${b}V${m}H${a}Z`} fill={c} stroke={c} />
      ))}
      <path d="M1681 948H1800V1148H1681Z" fill={C.gold} stroke={C.gold} />
    </g>
  </Sheet>
);

const Knobs = () => (
  <Sheet width="2504" height="1416" viewBox="0 186 2504 1416" fill={C.knob} aria-hidden>
    {knobs.map(([x, y]) => <circle key={`${x}-${y}`} cx={x} cy={y} r="10" />)}
  </Sheet>
);

/* ---------- side panel ---------- */
const groups = [
  { name: 'walls', total: '884.17', unit: 'ft²', area: true, items: [['Area 1', '448.91', '#dd981b'], ['Area 2', '0', '#b9a02b'], ['Area 3', '227.18', '#1bc391'], ['Area 4', '208.07', '#5f19dd']] },
  { name: 'Linear 1', total: '203.33', unit: 'ft', area: false, items: [['Linear 1', '203.33', '#e31cb0'], ['Linear 2', '0', '#2dc653']] },
  { name: 'doors and openings', total: '400.07', unit: 'ft²', area: true, items: [['Area 1', '120.63', '#225bb8'], ['Area 2', '90.63', '#e632ca'], ['Area 3', '115.61', '#b9a02b'], ['Area 4', '73.21', '#74da2a']] },
];

const RowEnd = () => (
  <>
    <RowIcon $w={68} $tone="#a1a7b1" aria-label="Toggle visibility"><Eye size={28} /></RowIcon>
    <RowIcon $w={34} $tone="#374151" aria-label="More"><Dots cols={1} rows={3} gap={9} r={2.4} /></RowIcon>
  </>
);

const SidePanel = () => (
  <Side>
    <SideHead>
      <SideTitle>Components</SideTitle>
      <HeadIcon $w={68} aria-label="Add"><Plus size={32} /></HeadIcon>
      <HeadIcon $w={92} aria-label="Add folder"><FolderPlus size={32} /></HeadIcon>
      <HeadIcon $w={74} aria-label="Expand all"><Maximize size={32} /></HeadIcon>
      <HeadIcon $w={72} aria-label="Collapse all"><Minimize size={32} /></HeadIcon>
      <HeadIcon $w={72} aria-label="Search"><Search size={32} /></HeadIcon>
      <HeadIcon $w={72} $tone="#22c55e" aria-label="Costs"><DollarSign size={32} /></HeadIcon>
      <HeadIcon $w={72} aria-label="More columns"><ChevronsRight size={32} /></HeadIcon>
      <HeadIcon $w={72} aria-label="Close panel"><PanelRightClose size={32} /></HeadIcon>
    </SideHead>
    {groups.map((g, gi) => (
      <React.Fragment key={g.name}>
        <GroupRow>
          <Slot $w={25}><Dots cols={2} rows={3} gap={9} r={2.6} /></Slot>
          <Slot $w={51} $tone="#6b7280"><ChevronDown size={32} /></Slot>
          <Slot $w={32}>{g.area ? <DashedSquare /> : <Dash />}</Slot>
          <Name $lead>{g.name}</Name>
          <Value $tabular>{g.total} <Ft>{g.unit}</Ft></Value>
          <RowEnd />
        </GroupRow>
        {g.items.map(([name, value, color], i) => (
          <ItemRow key={name} $on={gi === 0 && i === 0}>
            <Slot $w={25}><Dots cols={2} rows={3} gap={9} r={2.6} /></Slot>
            <Dot $c={color} />
            <Name>{name}</Name>
            <ValueButton>
              <Slot $w={28}><Ruler size={26} strokeWidth={1.6} /></Slot>
              <Value>{value} <Ft>{g.unit}</Ft></Value>
            </ValueButton>
            <RowEnd />
          </ItemRow>
        ))}
        <AddRow><AddButton><Plus size={24} strokeWidth={1.8} />Add measurement</AddButton></AddRow>
      </React.Fragment>
    ))}
  </Side>
);

const UnitPicker = ({ label }: { label: string }) => (
  <Picker $w={96} $inset={2}>
    <Select $small aria-label={label} defaultValue="in"><option>in</option><option>ft</option></Select>
    <ChevronDown size={28} />
  </Picker>
);

const CalculatorPanel = () => (
  <Calc>
    <CalcHead>
      <Calculator size={28} />
      <CalcTitle>Calculators</CalcTitle>
      <PlainButton aria-label="Close"><X size={28} /></PlainButton>
    </CalcHead>
    <Section>
      <Row>
        <label htmlFor="kind">Choose calculator</label>
        <CircleHelp size={28} />
      </Row>
      <Picker $inset={18} $gray>
        <Select id="kind" $h={64} defaultValue="Tile Calculator"><option>Tile Calculator</option></Select>
        <ChevronDown size={28} />
      </Picker>
    </Section>
    <Section>
      <Badge>walls — Area 1 — All shapes</Badge>
      <FieldLabel htmlFor="area">Area</FieldLabel>
      <AreaBox><AreaInput id="area" defaultValue="448,91" /><Unit>sq ft</Unit></AreaBox>
    </Section>
    <Section $last>
      <Fields>
        <Field>
          <FieldLabel htmlFor="len">Tile length</FieldLabel>
          <Pair><Input id="len" defaultValue="12" /><UnitPicker label="Tile length unit" /></Pair>
        </Field>
        <Field>
          <FieldLabel htmlFor="wid">Tile width</FieldLabel>
          <Pair><Input id="wid" defaultValue="12" /><UnitPicker label="Tile width unit" /></Pair>
        </Field>
        <Field>
          <FieldLabel htmlFor="gap">Grout gap</FieldLabel>
          <Pair><Input id="gap" defaultValue="0,125" /><UnitPicker label="Grout gap unit" /></Pair>
        </Field>
        <Field $wide>
          <FieldLabel htmlFor="pattern">Pattern</FieldLabel>
          <Picker $inset={4}>
            <Select id="pattern" $pad={20} defaultValue="Grid"><option>Grid</option></Select>
            <ChevronDown size={28} />
          </Picker>
        </Field>
        <Field>
          <FieldLabel htmlFor="waste">Waste <Muted>(%)</Muted></FieldLabel>
          <Input id="waste" defaultValue="10" />
        </Field>
        <Field>
          <FieldLabel htmlFor="tpb">Tiles per box</FieldLabel>
          <Input id="tpb" defaultValue="0" />
        </Field>
      </Fields>
      <Results>RESULTS</Results>
      <ResultBox>
        <span>Tiles needed</span>
        <ResultValue>484 <ResultUnit>pcs</ResultUnit></ResultValue>
      </ResultBox>
    </Section>
  </Calc>
);

export default function App() {
  return (
    <Shell>
      <Global />
      <Nav>
        {['Overview', 'Budget', 'Files', 'Takeoffs', 'Proposals'].map(t => (
          <NavLink key={t} href="#" $active={t === 'Takeoffs'}>{t}</NavLink>
        ))}
      </Nav>
      <Body>
        <Main>
          <TopBar>
            <Group $gap={16}>
              <Avatar><Calculator size={28} /></Avatar>
              <Title>2nd floor elevation</Title>
            </Group>
            <Group $gap={16}>
              <Measuring>Measuring: walls - Area 1</Measuring>
              <Toggle>
                <ToggleButton $on aria-label="Add"><Plus size={28} /></ToggleButton>
                <ToggleButton aria-label="Subtract"><Minus size={28} /></ToggleButton>
              </Toggle>
              <StopButton>Stop</StopButton>
            </Group>
            <Group>
              <IconButton $tone="#868b93" aria-label="Undo"><Undo2 size={32} /></IconButton>
              <IconButton $tone="#868b93" aria-label="Redo"><Redo2 size={32} /></IconButton>
              <IconButton $tone="#f0a08c" aria-label="Reset"><RotateCcw size={32} /></IconButton>
              <SaveSplit>
                <SaveButton>Save</SaveButton>
                <SaveMenu aria-label="Save options"><ChevronDown size={30} /></SaveMenu>
              </SaveSplit>
              <IconButton aria-label="History"><History size={32} /></IconButton>
              <IconButton aria-label="Settings"><Settings2 size={32} /></IconButton>
            </Group>
          </TopBar>

          <Canvas>
            <Plan />
            {pins.map(([x, y, t, c]) => <Pin key={`${x}-${y}`} $x={x} $y={y} $c={c}>{t}</Pin>)}
            <ShortPin $x={868} $y={711} $c={C.magenta}>93.56 ft</ShortPin>
            <Knobs />

            <Legend>
              <Slot $w={18}><Dots cols={2} rows={3} gap={8} r={2.4} /></Slot>
              Legend
              <Slot $w={24}><Plus size={24} /></Slot>
            </Legend>

            <ToolDock>
              <DockGrip><Dots cols={3} rows={2} gap={7} r={2.2} /></DockGrip>
              <DockCard>
                <Tool $on aria-label="Select"><MousePointer2 size={32} /></Tool>
                <Tool aria-label="Pan"><Hand size={32} /></Tool>
                <Tool aria-label="Zoom"><ZoomIn size={32} /></Tool>
                <Tool $more aria-label="Measure"><RulerDimensionLine size={32} /></Tool>
                <Tool $gap={4} $more aria-label="Text"><Type size={32} /></Tool>
                <Tool $gap={4} $more aria-label="Shape"><Hexagon size={32} /></Tool>
                <Tool $gap={12} aria-label="Calculator"><Calculator size={32} /></Tool>
                <Tool $gap={8} $tone="#b4472c" aria-label="Note"><StickyNote size={32} /></Tool>
                <Tool $gap={4} aria-label="Shortcuts"><Keyboard size={32} /></Tool>
              </DockCard>
            </ToolDock>

            <Floating $x={1058} $y={24}>
              <SideGrip><Dots cols={2} rows={3} gap={7} r={2} /></SideGrip>
              <ZoomCard>
                <OutlineButton aria-label="Zoom out"><Minus size={32} /></OutlineButton>
                <Percent>100%</Percent>
                <OutlineButton aria-label="Zoom in"><Plus size={32} /></OutlineButton>
                <OutlineButton $pad={24} $gap={8}><Maximize2 size={32} />Fit</OutlineButton>
                <Divider />
                <OutlineButton aria-label="Table"><Table size={32} /></OutlineButton>
              </ZoomCard>
            </Floating>

            <Floating $x={2130} $y={128}>
              <SideGrip><Dots cols={2} rows={3} gap={7} r={2} /></SideGrip>
              <DrawCard>
                <DrawLabel>DRAW</DrawLabel>
                <ShapeButton $on $tone="#3b74f0" aria-label="Rectangle"><Square size={32} /></ShapeButton>
                <ShapeButton $tone="#d1d5db" aria-label="Polygon"><Pentagon size={32} /></ShapeButton>
                <ShapeButton $tone="#d1d5db" aria-label="Circle"><Circle size={32} /></ShapeButton>
              </DrawCard>
            </Floating>

            <Floating $x={1720} $y={301}>
              <SideGrip><Dots cols={2} rows={3} gap={7} r={2} /></SideGrip>
              <CalculatorPanel />
            </Floating>

            <Started><GraduationCap size={40} />Getting Started 3/4</Started>
          </Canvas>

          <BottomBar>
            <EdgeDot />
            <OutlineButton $faint aria-label="Previous page"><ChevronLeft size={32} /></OutlineButton>
            <PageButton $pad={24}><ChevronUp size={32} />000 Drawings_FULL SET NO ...</PageButton>
            <OutlineButton $faint aria-label="Next page"><ChevronRight size={32} /></OutlineButton>
            <OutlineButton $pad={24}><Plus size={32} /><Small>Add pages</Small></OutlineButton>
            <OutlineButton $pad={24}><RotateCw size={32} /><Small>Rotate page</Small></OutlineButton>
            <Slot $w={0} />
            <OutlineButton $pad={24} $tone="#2563eb"><Download size={32} /><Small>PDF</Small></OutlineButton>
            <Spacer />
            <Cell $w={190}><RulerDimensionLine size={40} /><CellText>Rulers</CellText></Cell>
            <Cell $w={233} $tone="#8fcfa0">
              <DraftingCompass size={40} />
              <ScaleText>Scale<ScaleValue>1/2" = 1'-0"</ScaleValue></ScaleText>
            </Cell>
          </BottomBar>
        </Main>
        <SidePanel />
      </Body>
    </Shell>
  );
}
